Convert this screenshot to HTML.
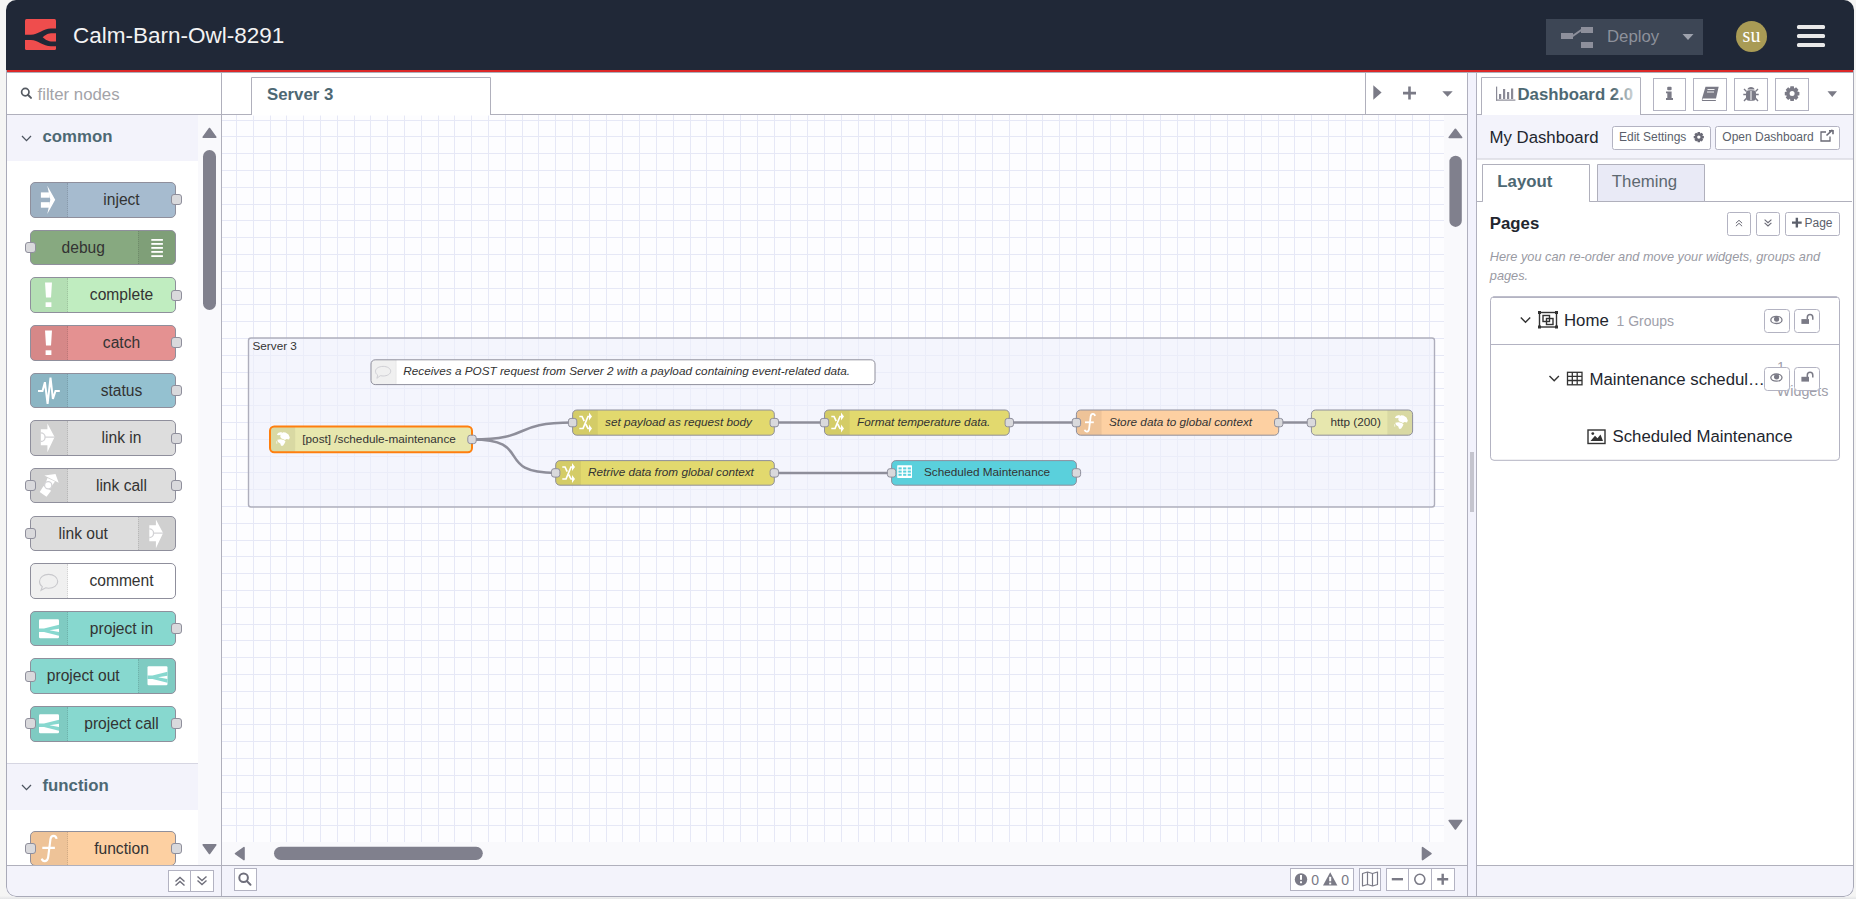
<!DOCTYPE html><html><head><meta charset="utf-8"><style>
*{box-sizing:border-box;margin:0;padding:0}
html,body{width:1856px;height:899px;overflow:hidden;background:linear-gradient(#f5f5f4 0,#f5f5f4 896px,#eeeeef 897px,#e4e5e6 899px);font-family:"Liberation Sans",sans-serif}
.a{position:absolute}
#win{position:absolute;left:6px;top:0;width:1848px;height:897px;border-radius:10px;overflow:hidden;background:#fff}
#wborder{position:absolute;left:0;top:60px;width:1848px;height:837px;border-radius:0 0 10px 10px;border:1px solid #a9aab8;border-top:none;pointer-events:none}
#hdr{position:absolute;left:0;top:0;width:1848px;height:70px;background:#202837;z-index:5}
.title{left:67px;top:21.3px;font-size:22.5px;color:#f3f3f3;white-space:nowrap;line-height:30px}
.deploy{left:1540px;top:19px;width:157px;height:36px;background:#3d4655}
.deploy span{position:absolute;left:61px;top:8px;font-size:16.8px;color:#8d919b;line-height:20px}
.avatar{left:1730px;top:21px;width:31px;height:31px;border-radius:50%;background:#a99b55;color:#fff;font-family:"Liberation Serif",serif;font-size:20px;text-align:center;line-height:29px}
.burger{left:1791px;width:28px;height:4.6px;background:#e9e9e9;border-radius:1.5px}
.pn{position:absolute;left:24px;width:146px;height:35.6px;border:1px solid #8f8f9c;border-radius:5px}
.pn .ic{position:absolute;top:0;bottom:0;width:37px;background:rgba(0,0,0,0.06)}
.pn .ic.l{left:0;border-right:1px dotted rgba(0,0,0,0.12);border-radius:4px 0 0 4px}
.pn .ic.r{right:0;border-left:1px dotted rgba(0,0,0,0.12);border-radius:0 4px 4px 0}
.pn .lb{position:absolute;top:0;line-height:33.6px;font-size:15.6px;color:#333;text-align:center;white-space:nowrap}
.pn .ic svg{position:absolute;left:0;top:0}
.port{position:absolute;width:11px;height:11px;background:#d9d9dc;border:1px solid #8f8f9c;border-radius:3px}
.cat{position:absolute;left:0;width:192px;height:46px;background:#f3f3fb}
.cat .t{position:absolute;left:36.5px;top:12px;font-size:16.8px;font-weight:bold;color:#4d6873;line-height:20px}
.cat svg{position:absolute;left:14px;top:19px}
.btn{position:absolute;background:#fff;border:1px solid #b3b3c2}
</style></head><body><div id="win">
<div id="hdr">
<svg class="a" style="left:19px;top:19px" width="31" height="31" viewBox="25 19 31 31">
<rect x="25" y="19" width="31" height="31" rx="1.5" fill="#ef4d4d"/>
<path d="M25,34.8 L31,34.8 C38,34.8 43,28.5 51,28.5 L56,28.5 L56,33.3 L51,33.3 C47,33.3 44,36.3 42.7,37.3 C44,38.3 47,41.4 51,41.4 L56,41.4 L56,46.2 L51,46.2 C43,46.2 38,39.9 31,39.9 L25,39.9 Z" fill="#202837"/>
</svg>
<div class="a title">Calm-Barn-Owl-8291</div>
<div class="a deploy">
<svg class="a" style="left:15px;top:8px" width="34" height="22" viewBox="1561 27 34 22">
<rect x="1561" y="33" width="12" height="6" fill="#8d8f9b"/><rect x="1581" y="27" width="12" height="6" fill="#8d8f9b"/><rect x="1581" y="42" width="12" height="6" fill="#8d8f9b"/>
<path d="M1572,36.5 L1582,29.5" stroke="#8d8f9b" stroke-width="2"/></svg>
<span>Deploy</span>
<svg class="a" style="left:136px;top:14px" width="12" height="8" viewBox="0 0 12 8"><path d="M0.5,1 L11.5,1 L6,7 Z" fill="#9ea2ad"/></svg>
</div>
<div class="a avatar">su</div>
<div class="a burger" style="top:24.5px"></div><div class="a burger" style="top:33.8px"></div><div class="a burger" style="top:42.7px"></div>
</div>
<div class="a" style="left:0;top:70px;width:1848px;height:2px;background:#dc2828"></div>
<div class="a" style="left:0;top:72px;width:1848px;height:1px;background:#aeafbb"></div>

<div class="a" style="left:0;top:73px;width:215px;height:823px;background:#fff;overflow:hidden">
<svg class="a" style="left:14px;top:14px" width="13" height="13" viewBox="0 0 13 13"><circle cx="5.3" cy="5.1" r="3.7" fill="none" stroke="#555a62" stroke-width="1.7"/><path d="M7.9,7.8 L11,10.9" stroke="#555a62" stroke-width="2" stroke-linecap="round"/></svg>
<div class="a" style="left:31.5px;top:11.799999999999997px;font-size:16.8px;color:#a3a3a8;line-height:20px">filter nodes</div>
<div class="a" style="left:0;top:41px;width:215px;height:1px;background:#b0b0bc"></div>
<div class="a" style="left:192px;top:42px;width:23px;height:750px;background:#f9f9fc"></div>
<svg class="a" style="left:196px;top:54px" width="15" height="12" viewBox="0 0 15 12"><path d="M7.5,1.5 L13.8,10.2 L1.2,10.2 Z" fill="#7e7e8b" stroke="#7e7e8b" stroke-width="1.6" stroke-linejoin="round"/></svg>
<div class="a" style="left:197px;top:77px;width:13px;height:160px;border-radius:6.5px;background:#80808d"></div>
<svg class="a" style="left:196px;top:770px" width="15" height="12" viewBox="0 0 15 12"><path d="M7.5,10.5 L13.8,1.8 L1.2,1.8 Z" fill="#7e7e8b" stroke="#7e7e8b" stroke-width="1.6" stroke-linejoin="round"/></svg>
<div class="cat" style="top:42px"><svg class="a" style="left:15px;top:20px" width="11" height="7" viewBox="0 0 11 7"><path d="M1,1 L5.5,5.6 L10,1" fill="none" stroke="#4d5560" stroke-width="1.3"/></svg><div class="t">common</div></div>
<div class="a" style="left:0;top:690px;width:192px;height:1px;background:#d6d6e2"></div>
<div class="cat" style="top:691px"><svg class="a" style="left:15px;top:20px" width="11" height="7" viewBox="0 0 11 7"><path d="M1,1 L5.5,5.6 L10,1" fill="none" stroke="#4d5560" stroke-width="1.3"/></svg><div class="t">function</div></div>
<div class="pn" style="top:109.1px;background:#a6bbcf"><div class="ic l"></div><div class="lb" style="left:37px;width:107px">inject</div><svg class="a" style="left:-1px;top:-1px" width="146" height="36" viewBox="0 0 146 36"><rect x="10.9" y="10.4" width="8.8" height="5.3" fill="#fff"/><rect x="10.9" y="20.2" width="8.8" height="5.5" fill="#fff"/><path d="M17.3,3.7 L25.2,17.8 L17.3,32.1 L20.3,17.8 Z" fill="#fff"/></svg></div>
<div class="port" style="left:164.5px;top:121.4px"></div>
<div class="pn" style="top:156.7px;background:#87a980"><div class="lb" style="left:0;width:104.5px">debug</div><div class="ic r"></div><svg class="a" style="left:-1px;top:-1px" width="146" height="36" viewBox="0 0 146 36"><g fill="#fff"><rect x="121.3" y="9" width="11.6" height="1.8"/><rect x="121.3" y="13" width="11.6" height="1.8"/><rect x="121.3" y="17" width="11.6" height="1.8"/><rect x="121.3" y="21" width="11.6" height="1.8"/><rect x="121.3" y="25.2" width="11.6" height="1.8"/></g></svg></div>
<div class="port" style="left:19.3px;top:169.0px"></div>
<div class="pn" style="top:204.4px;background:#c0edc0"><div class="ic l"></div><div class="lb" style="left:37px;width:107px">complete</div><svg class="a" style="left:-1px;top:-1px" width="146" height="36" viewBox="0 0 146 36"><path d="M15,5.6 L22,5.6 L21,20.5 L16,20.5 Z" fill="#fff"/><rect x="15.6" y="25.3" width="5.8" height="4.7" fill="#fff"/></svg></div>
<div class="port" style="left:164.5px;top:216.7px"></div>
<div class="pn" style="top:252.0px;background:#e49191"><div class="ic l"></div><div class="lb" style="left:37px;width:107px">catch</div><svg class="a" style="left:-1px;top:-1px" width="146" height="36" viewBox="0 0 146 36"><path d="M15,5.6 L22,5.6 L21,20.5 L16,20.5 Z" fill="#fff"/><rect x="15.6" y="25.3" width="5.8" height="4.7" fill="#fff"/></svg></div>
<div class="port" style="left:164.5px;top:264.3px"></div>
<div class="pn" style="top:299.6px;background:#94c1d0"><div class="ic l"></div><div class="lb" style="left:37px;width:107px">status</div><svg class="a" style="left:-1px;top:-1px" width="146" height="36" viewBox="0 0 146 36"><path d="M8,17.9 L12.5,17.9 L14.9,9.2 L17.6,30.8 L20.5,4.5 L22.9,25.9 L25.5,17.9 L29.8,17.9" fill="none" stroke="#fff" stroke-width="2" stroke-linejoin="miter" stroke-miterlimit="3"/></svg></div>
<div class="port" style="left:164.5px;top:311.9px"></div>
<div class="pn" style="top:347.2px;background:#dddddd"><div class="ic l"></div><div class="lb" style="left:37px;width:107px">link in</div><svg class="a" style="left:-1px;top:-1px" width="146" height="36" viewBox="0 0 146 36"><path d="M10.8,9.3 L17.4,9.3 L17.4,3.5 L24.6,16.9 L17.4,32.2 L17.4,25.3 L10.8,25.3 Z" fill="#fff"/><path d="M10.8,12.9 A4.3,4.3 0 0 1 10.8,21.5 M15.1,17.2 L25,17.2" fill="none" stroke="#d3d3d6" stroke-width="1.3"/></svg></div>
<div class="port" style="left:164.5px;top:359.6px"></div>
<div class="pn" style="top:394.9px;background:#dddddd"><div class="ic l"></div><div class="lb" style="left:37px;width:107px">link call</div><svg class="a" style="left:-1px;top:-1px" width="146" height="36" viewBox="0 0 146 36"><path d="M14.4,7.6 L25.5,6.1 L28.7,14.8 Z M17.5,10.1 L25,13.6 L21,19.1 L15.5,15.1 Z M9.7,23.9 L13.5,18 L21.1,22.8 L16.5,28.7 Z" fill="#fff"/><circle cx="18.2" cy="17.3" r="3.6" fill="#fff" stroke="#d3d3d6" stroke-width="1.2"/></svg></div>
<div class="port" style="left:19.3px;top:407.2px"></div>
<div class="port" style="left:164.5px;top:407.2px"></div>
<div class="pn" style="top:442.5px;background:#dddddd"><div class="lb" style="left:0;width:104.5px">link out</div><div class="ic r"></div><svg class="a" style="left:-1px;top:-1px" width="146" height="36" viewBox="0 0 146 36"><g transform="translate(108.5,0)"><path d="M10.8,9.3 L17.4,9.3 L17.4,3.5 L24.6,16.9 L17.4,32.2 L17.4,25.3 L10.8,25.3 Z" fill="#fff"/><path d="M10.8,12.9 A4.3,4.3 0 0 1 10.8,21.5 M15.1,17.2 L25,17.2" fill="none" stroke="#d3d3d6" stroke-width="1.3"/></g></svg></div>
<div class="port" style="left:19.3px;top:454.8px"></div>
<div class="pn" style="top:490.1px;background:#ffffff"><div class="ic l"></div><div class="lb" style="left:37px;width:107px">comment</div><svg class="a" style="left:-1px;top:-1px" width="146" height="36" viewBox="0 0 146 36"><path d="M9.5,18.5 C9.5,14.3 13.6,11.4 18.6,11.4 C23.6,11.4 27.7,14.3 27.7,18.5 C27.7,22.6 23.6,25.2 18.6,25.2 C17.6,25.2 16.6,25.1 15.7,24.8 L11,27.3 L12.3,23.6 C10.5,22.4 9.5,20.6 9.5,18.5 Z" fill="none" stroke="#c8c8cc" stroke-width="1.1"/></svg></div>
<div class="pn" style="top:537.8px;background:#87d8cf"><div class="ic l"></div><div class="lb" style="left:37px;width:107px">project in</div><svg class="a" style="left:-1px;top:-1px" width="146" height="36" viewBox="0 0 146 36"><g transform="translate(9,8.2)"><rect x="0" y="0" width="20" height="19" rx="1.2" fill="#fff"/><path d="M0,9.2 L5,9.2 L20,5.5 L20,9.5 L10.5,11.05 L20,12.9 L20,16.6 L5,12.9 L0,12.9 Z" fill="#87d8cf"/></g></svg></div>
<div class="port" style="left:164.5px;top:550.1px"></div>
<div class="pn" style="top:585.4px;background:#87d8cf"><div class="lb" style="left:0;width:104.5px">project out</div><div class="ic r"></div><svg class="a" style="left:-1px;top:-1px" width="146" height="36" viewBox="0 0 146 36"><g transform="translate(108.5,0)"><g transform="translate(9,8.2)"><rect x="0" y="0" width="20" height="19" rx="1.2" fill="#fff"/><path d="M0,9.2 L5,9.2 L20,5.5 L20,9.5 L10.5,11.05 L20,12.9 L20,16.6 L5,12.9 L0,12.9 Z" fill="#87d8cf"/></g></g></svg></div>
<div class="port" style="left:19.3px;top:597.7px"></div>
<div class="pn" style="top:633.0px;background:#87d8cf"><div class="ic l"></div><div class="lb" style="left:37px;width:107px">project call</div><svg class="a" style="left:-1px;top:-1px" width="146" height="36" viewBox="0 0 146 36"><g transform="translate(9,8.2)"><rect x="0" y="0" width="20" height="19" rx="1.2" fill="#fff"/><path d="M0,9.2 L5,9.2 L20,5.5 L20,9.5 L10.5,11.05 L20,12.9 L20,16.6 L5,12.9 L0,12.9 Z" fill="#87d8cf"/></g></svg></div>
<div class="port" style="left:19.3px;top:645.3px"></div>
<div class="port" style="left:164.5px;top:645.3px"></div>
<div class="pn" style="top:757.5px;background:#fdd0a2"><div class="ic l"></div><div class="lb" style="left:37px;width:107px">function</div><svg class="a" style="left:-1px;top:-1px" width="146" height="36" viewBox="0 0 146 36"><g transform="scale(1.43) translate(-1076.4,-410.5)"><g fill="none" stroke="#fff" stroke-width="1.5"><path d="M1095,416 C1094.5,413.3 1091.3,413 1090.7,416.2 L1089.1,428.8 C1088.6,432.3 1085.4,432.3 1084.6,429.8"/><path d="M1085,422.3 L1093.8,422.3"/></g></g></svg></div>
<div class="port" style="left:19.3px;top:769.8px"></div>
<div class="port" style="left:164.5px;top:769.8px"></div>
<div class="a" style="left:0;top:792px;width:215px;height:31px;background:#f3f3fb;border-top:1px solid #b0b0bc"></div>
<div class="btn" style="left:162px;top:797px;width:23px;height:22px"><svg class="a" style="left:5px;top:5px" width="12" height="11" viewBox="0 0 12 11"><path d="M1.5,5.5 L6,1.5 L10.5,5.5 M1.5,9.5 L6,5.5 L10.5,9.5" fill="none" stroke="#6f6f7b" stroke-width="1.4"/></svg></div>
<div class="btn" style="left:184px;top:797px;width:24px;height:22px"><svg class="a" style="left:5px;top:4px" width="12" height="11" viewBox="0 0 12 11"><path d="M1.5,1.5 L6,5.5 L10.5,1.5 M1.5,5.5 L6,9.5 L10.5,5.5" fill="none" stroke="#6f6f7b" stroke-width="1.4"/></svg></div>
</div>
<div class="a" style="left:215px;top:73px;width:1px;height:823px;background:#b0b0bc"></div>
<svg class="a" style="left:-6px;top:0" width="1856" height="899" viewBox="0 0 1856 899" font-family="Liberation Sans, sans-serif"><rect x="222" y="73" width="1245" height="41" fill="#fff"/><rect x="222" y="114" width="1245" height="1" fill="#b0b0bc"/><rect x="222" y="115" width="1222" height="727" fill="#fdfdff"/><rect x="236" y="115" width="1" height="727" fill="#e6e8f6"/><rect x="253" y="115" width="1" height="727" fill="#e6e8f6"/><rect x="270" y="115" width="1" height="727" fill="#e6e8f6"/><rect x="286" y="115" width="1" height="727" fill="#e6e8f6"/><rect x="303" y="115" width="1" height="727" fill="#e6e8f6"/><rect x="320" y="115" width="1" height="727" fill="#e6e8f6"/><rect x="337" y="115" width="1" height="727" fill="#e6e8f6"/><rect x="354" y="115" width="1" height="727" fill="#e6e8f6"/><rect x="370" y="115" width="1" height="727" fill="#e6e8f6"/><rect x="387" y="115" width="1" height="727" fill="#e6e8f6"/><rect x="404" y="115" width="1" height="727" fill="#e6e8f6"/><rect x="421" y="115" width="1" height="727" fill="#e6e8f6"/><rect x="438" y="115" width="1" height="727" fill="#e6e8f6"/><rect x="454" y="115" width="1" height="727" fill="#e6e8f6"/><rect x="471" y="115" width="1" height="727" fill="#e6e8f6"/><rect x="488" y="115" width="1" height="727" fill="#e6e8f6"/><rect x="505" y="115" width="1" height="727" fill="#e6e8f6"/><rect x="522" y="115" width="1" height="727" fill="#e6e8f6"/><rect x="538" y="115" width="1" height="727" fill="#e6e8f6"/><rect x="555" y="115" width="1" height="727" fill="#e6e8f6"/><rect x="572" y="115" width="1" height="727" fill="#e6e8f6"/><rect x="589" y="115" width="1" height="727" fill="#e6e8f6"/><rect x="606" y="115" width="1" height="727" fill="#e6e8f6"/><rect x="622" y="115" width="1" height="727" fill="#e6e8f6"/><rect x="639" y="115" width="1" height="727" fill="#e6e8f6"/><rect x="656" y="115" width="1" height="727" fill="#e6e8f6"/><rect x="673" y="115" width="1" height="727" fill="#e6e8f6"/><rect x="690" y="115" width="1" height="727" fill="#e6e8f6"/><rect x="706" y="115" width="1" height="727" fill="#e6e8f6"/><rect x="723" y="115" width="1" height="727" fill="#e6e8f6"/><rect x="740" y="115" width="1" height="727" fill="#e6e8f6"/><rect x="757" y="115" width="1" height="727" fill="#e6e8f6"/><rect x="774" y="115" width="1" height="727" fill="#e6e8f6"/><rect x="790" y="115" width="1" height="727" fill="#e6e8f6"/><rect x="807" y="115" width="1" height="727" fill="#e6e8f6"/><rect x="824" y="115" width="1" height="727" fill="#e6e8f6"/><rect x="841" y="115" width="1" height="727" fill="#e6e8f6"/><rect x="858" y="115" width="1" height="727" fill="#e6e8f6"/><rect x="874" y="115" width="1" height="727" fill="#e6e8f6"/><rect x="891" y="115" width="1" height="727" fill="#e6e8f6"/><rect x="908" y="115" width="1" height="727" fill="#e6e8f6"/><rect x="925" y="115" width="1" height="727" fill="#e6e8f6"/><rect x="942" y="115" width="1" height="727" fill="#e6e8f6"/><rect x="958" y="115" width="1" height="727" fill="#e6e8f6"/><rect x="975" y="115" width="1" height="727" fill="#e6e8f6"/><rect x="992" y="115" width="1" height="727" fill="#e6e8f6"/><rect x="1009" y="115" width="1" height="727" fill="#e6e8f6"/><rect x="1026" y="115" width="1" height="727" fill="#e6e8f6"/><rect x="1042" y="115" width="1" height="727" fill="#e6e8f6"/><rect x="1059" y="115" width="1" height="727" fill="#e6e8f6"/><rect x="1076" y="115" width="1" height="727" fill="#e6e8f6"/><rect x="1093" y="115" width="1" height="727" fill="#e6e8f6"/><rect x="1110" y="115" width="1" height="727" fill="#e6e8f6"/><rect x="1126" y="115" width="1" height="727" fill="#e6e8f6"/><rect x="1143" y="115" width="1" height="727" fill="#e6e8f6"/><rect x="1160" y="115" width="1" height="727" fill="#e6e8f6"/><rect x="1177" y="115" width="1" height="727" fill="#e6e8f6"/><rect x="1194" y="115" width="1" height="727" fill="#e6e8f6"/><rect x="1210" y="115" width="1" height="727" fill="#e6e8f6"/><rect x="1227" y="115" width="1" height="727" fill="#e6e8f6"/><rect x="1244" y="115" width="1" height="727" fill="#e6e8f6"/><rect x="1261" y="115" width="1" height="727" fill="#e6e8f6"/><rect x="1278" y="115" width="1" height="727" fill="#e6e8f6"/><rect x="1294" y="115" width="1" height="727" fill="#e6e8f6"/><rect x="1311" y="115" width="1" height="727" fill="#e6e8f6"/><rect x="1328" y="115" width="1" height="727" fill="#e6e8f6"/><rect x="1345" y="115" width="1" height="727" fill="#e6e8f6"/><rect x="1362" y="115" width="1" height="727" fill="#e6e8f6"/><rect x="1378" y="115" width="1" height="727" fill="#e6e8f6"/><rect x="1395" y="115" width="1" height="727" fill="#e6e8f6"/><rect x="1412" y="115" width="1" height="727" fill="#e6e8f6"/><rect x="1429" y="115" width="1" height="727" fill="#e6e8f6"/><rect x="222" y="120" width="1222" height="1" fill="#e6e8f6"/><rect x="222" y="136" width="1222" height="1" fill="#e6e8f6"/><rect x="222" y="153" width="1222" height="1" fill="#e6e8f6"/><rect x="222" y="170" width="1222" height="1" fill="#e6e8f6"/><rect x="222" y="187" width="1222" height="1" fill="#e6e8f6"/><rect x="222" y="204" width="1222" height="1" fill="#e6e8f6"/><rect x="222" y="220" width="1222" height="1" fill="#e6e8f6"/><rect x="222" y="237" width="1222" height="1" fill="#e6e8f6"/><rect x="222" y="254" width="1222" height="1" fill="#e6e8f6"/><rect x="222" y="271" width="1222" height="1" fill="#e6e8f6"/><rect x="222" y="288" width="1222" height="1" fill="#e6e8f6"/><rect x="222" y="304" width="1222" height="1" fill="#e6e8f6"/><rect x="222" y="321" width="1222" height="1" fill="#e6e8f6"/><rect x="222" y="338" width="1222" height="1" fill="#e6e8f6"/><rect x="222" y="355" width="1222" height="1" fill="#e6e8f6"/><rect x="222" y="372" width="1222" height="1" fill="#e6e8f6"/><rect x="222" y="388" width="1222" height="1" fill="#e6e8f6"/><rect x="222" y="405" width="1222" height="1" fill="#e6e8f6"/><rect x="222" y="422" width="1222" height="1" fill="#e6e8f6"/><rect x="222" y="439" width="1222" height="1" fill="#e6e8f6"/><rect x="222" y="456" width="1222" height="1" fill="#e6e8f6"/><rect x="222" y="472" width="1222" height="1" fill="#e6e8f6"/><rect x="222" y="489" width="1222" height="1" fill="#e6e8f6"/><rect x="222" y="506" width="1222" height="1" fill="#e6e8f6"/><rect x="222" y="523" width="1222" height="1" fill="#e6e8f6"/><rect x="222" y="540" width="1222" height="1" fill="#e6e8f6"/><rect x="222" y="556" width="1222" height="1" fill="#e6e8f6"/><rect x="222" y="573" width="1222" height="1" fill="#e6e8f6"/><rect x="222" y="590" width="1222" height="1" fill="#e6e8f6"/><rect x="222" y="607" width="1222" height="1" fill="#e6e8f6"/><rect x="222" y="624" width="1222" height="1" fill="#e6e8f6"/><rect x="222" y="640" width="1222" height="1" fill="#e6e8f6"/><rect x="222" y="657" width="1222" height="1" fill="#e6e8f6"/><rect x="222" y="674" width="1222" height="1" fill="#e6e8f6"/><rect x="222" y="691" width="1222" height="1" fill="#e6e8f6"/><rect x="222" y="708" width="1222" height="1" fill="#e6e8f6"/><rect x="222" y="724" width="1222" height="1" fill="#e6e8f6"/><rect x="222" y="741" width="1222" height="1" fill="#e6e8f6"/><rect x="222" y="758" width="1222" height="1" fill="#e6e8f6"/><rect x="222" y="775" width="1222" height="1" fill="#e6e8f6"/><rect x="222" y="792" width="1222" height="1" fill="#e6e8f6"/><rect x="222" y="808" width="1222" height="1" fill="#e6e8f6"/><rect x="222" y="825" width="1222" height="1" fill="#e6e8f6"/><rect x="248.5" y="338" width="1186" height="169" rx="2.5" fill="#eef0fb" fill-opacity="0.6" stroke="#aeaebc" stroke-width="1.4"/><text x="252.5" y="349.8" font-size="11.76" fill="#333">Server 3</text><path d="M472,439.4 C535,439.4 509.6,422.6 572.6,422.6" fill="none" stroke="#8e8e9a" stroke-width="2.5"/><path d="M472,439.4 C535,439.4 492.70000000000005,472.9 555.7,472.9" fill="none" stroke="#8e8e9a" stroke-width="2.5"/><path d="M774.3,422.6 L824.5,422.6 M1009.3,422.6 L1076.4,422.6 M1278.7,422.6 L1311.4,422.6 M774.3,472.9 L891.6,472.9" stroke="#8e8e9a" stroke-width="2.5"/><rect x="371" y="359.8" width="504.0" height="24.8" rx="4.2" fill="#fff" stroke="none"/><path d="M375.2,359.8 L396.2,359.8 L396.2,384.6 L375.2,384.6 A4.2,4.2 0 0 1 371,380.40000000000003 L371,364.0 A4.2,4.2 0 0 1 375.2,359.8 Z" fill="#000" fill-opacity="0.06"/><rect x="371" y="359.8" width="504.0" height="24.8" rx="4.2" fill="none" stroke="#8f8f9c" stroke-width="1"/><g transform="translate(374.5,365)"><path d="M1,6.2 C1,3.4 4.4,1.4 8.6,1.4 C12.8,1.4 16.2,3.4 16.2,6.2 C16.2,9 12.8,11 8.6,11 C7.6,11 6.7,10.9 5.8,10.7 L2.4,13.3 L3.2,10.1 C1.8,9.2 1,7.8 1,6.2 Z" fill="none" stroke="#cfcfd4" stroke-width="1"/></g><text x="403.3" y="375.4" font-size="11.76" fill="#333" style="font-style:italic;">Receives a POST request from Server 2 with a payload containing event-related data.</text><path d="M396.2,360.3 L396.2,384.1" stroke="#000" stroke-opacity="0.06"/><rect x="270" y="426.6" width="202.0" height="25.6" rx="4.2" fill="#e7e7ae" stroke="none"/><path d="M274.2,426.6 L295.2,426.6 L295.2,452.2 L274.2,452.2 A4.2,4.2 0 0 1 270,448.0 L270,430.8 A4.2,4.2 0 0 1 274.2,426.6 Z" fill="#000" fill-opacity="0.06"/><rect x="270" y="426.6" width="202.0" height="25.6" rx="4.2" fill="none" stroke="#ff7f0e" stroke-width="2"/><g transform="translate(276.5,432)"><g fill="#fff"><path d="M0.3,2.5 L2,0.8 L5,0 L5.6,1.5 L4,3 L1.5,3.3 Z"/><path d="M4,2.5 L6.5,0.2 L9,0.5 L12,2.5 L13.3,5.5 L12.5,7.5 L10,7 L8.5,8 L7,7.2 L5,6.5 L3.8,5 Z"/><path d="M0.8,7.8 L4,7.2 L7.5,8 L9,9.5 L8,11.5 L6.5,13.8 L4.5,13.8 L3.8,11.5 L1.5,10 Z"/><path d="M-0.5,9.3 L0.6,9.3 L0.8,11.8 L-0.2,11.8 Z" opacity="0.6"/></g></g><text x="302.3" y="442.6" font-size="11.76" fill="#333" style="">[post] /schedule-maintenance</text><rect x="467.8" y="435.2" width="8.4" height="8.4" rx="2.5" fill="#d9d9dc" stroke="#8f8f9c" stroke-width="1"/><rect x="572.6" y="410" width="201.7" height="25.2" rx="4.2" fill="#e2d96e" stroke="none"/><path d="M576.8000000000001,410 L597.8000000000001,410 L597.8000000000001,435.2 L576.8000000000001,435.2 A4.2,4.2 0 0 1 572.6,431.0 L572.6,414.2 A4.2,4.2 0 0 1 576.8000000000001,410 Z" fill="#000" fill-opacity="0.06"/><rect x="572.6" y="410" width="201.7" height="25.2" rx="4.2" fill="none" stroke="#8f8f9c" stroke-width="1"/><g transform="translate(579,412)"><g fill="none" stroke="#fff" stroke-width="1.7"><path d="M0.3,16.5 L4,16.5 L9,4.5 L10.8,4.5"/><path d="M0.3,4.5 L3,4.5 L5.2,9.2 M6.6,12 L9,16.5 L10.8,16.5"/></g><g fill="#fff"><path d="M10,0.6 L13,4.5 L10,8.4 Z"/><path d="M10,12.6 L13,16.5 L10,20.4 Z"/></g></g><text x="605" y="425.8" font-size="11.76" fill="#333" style="font-style:italic;">set payload as request body</text><rect x="568.4" y="418.4" width="8.4" height="8.4" rx="2.5" fill="#d9d9dc" stroke="#8f8f9c" stroke-width="1"/><rect x="770.1" y="418.4" width="8.4" height="8.4" rx="2.5" fill="#d9d9dc" stroke="#8f8f9c" stroke-width="1"/><rect x="824.5" y="410" width="184.8" height="25.2" rx="4.2" fill="#e2d96e" stroke="none"/><path d="M828.7,410 L849.7,410 L849.7,435.2 L828.7,435.2 A4.2,4.2 0 0 1 824.5,431.0 L824.5,414.2 A4.2,4.2 0 0 1 828.7,410 Z" fill="#000" fill-opacity="0.06"/><rect x="824.5" y="410" width="184.8" height="25.2" rx="4.2" fill="none" stroke="#8f8f9c" stroke-width="1"/><g transform="translate(831,412)"><g fill="none" stroke="#fff" stroke-width="1.7"><path d="M0.3,16.5 L4,16.5 L9,4.5 L10.8,4.5"/><path d="M0.3,4.5 L3,4.5 L5.2,9.2 M6.6,12 L9,16.5 L10.8,16.5"/></g><g fill="#fff"><path d="M10,0.6 L13,4.5 L10,8.4 Z"/><path d="M10,12.6 L13,16.5 L10,20.4 Z"/></g></g><text x="857" y="425.8" font-size="11.76" fill="#333" style="font-style:italic;">Format temperature data.</text><rect x="820.3" y="418.4" width="8.4" height="8.4" rx="2.5" fill="#d9d9dc" stroke="#8f8f9c" stroke-width="1"/><rect x="1005.1" y="418.4" width="8.4" height="8.4" rx="2.5" fill="#d9d9dc" stroke="#8f8f9c" stroke-width="1"/><rect x="1076.4" y="410" width="202.3" height="25.2" rx="4.2" fill="#fdd0a2" stroke="none"/><path d="M1080.6000000000001,410 L1101.6000000000001,410 L1101.6000000000001,435.2 L1080.6000000000001,435.2 A4.2,4.2 0 0 1 1076.4,431.0 L1076.4,414.2 A4.2,4.2 0 0 1 1080.6000000000001,410 Z" fill="#000" fill-opacity="0.06"/><rect x="1076.4" y="410" width="202.3" height="25.2" rx="4.2" fill="none" stroke="#8f8f9c" stroke-width="1"/><g fill="none" stroke="#fff" stroke-width="1.8"><path d="M1095,416 C1094.5,413.3 1091.3,413 1090.7,416.2 L1089.1,428.8 C1088.6,432.3 1085.4,432.3 1084.6,429.8"/><path d="M1085,422.3 L1093.8,422.3"/></g><text x="1109" y="425.8" font-size="11.76" fill="#333" style="font-style:italic;">Store data to global context</text><rect x="1072.2" y="418.4" width="8.4" height="8.4" rx="2.5" fill="#d9d9dc" stroke="#8f8f9c" stroke-width="1"/><rect x="1274.5" y="418.4" width="8.4" height="8.4" rx="2.5" fill="#d9d9dc" stroke="#8f8f9c" stroke-width="1"/><rect x="1311.4" y="410" width="101.2" height="25.2" rx="4.2" fill="#e7e7ae" stroke="none"/><path d="M1387.3999999999999,410 L1408.3999999999999,410 A4.2,4.2 0 0 1 1412.6,414.2 L1412.6,431.0 A4.2,4.2 0 0 1 1408.3999999999999,435.2 L1387.3999999999999,435.2 Z" fill="#000" fill-opacity="0.06"/><rect x="1311.4" y="410" width="101.2" height="25.2" rx="4.2" fill="none" stroke="#8f8f9c" stroke-width="1"/><g transform="translate(1394.5,415)"><g fill="#fff"><path d="M0.3,2.5 L2,0.8 L5,0 L5.6,1.5 L4,3 L1.5,3.3 Z"/><path d="M4,2.5 L6.5,0.2 L9,0.5 L12,2.5 L13.3,5.5 L12.5,7.5 L10,7 L8.5,8 L7,7.2 L5,6.5 L3.8,5 Z"/><path d="M0.8,7.8 L4,7.2 L7.5,8 L9,9.5 L8,11.5 L6.5,13.8 L4.5,13.8 L3.8,11.5 L1.5,10 Z"/><path d="M-0.5,9.3 L0.6,9.3 L0.8,11.8 L-0.2,11.8 Z" opacity="0.6"/></g></g><text x="1330.5" y="425.8" font-size="11.76" fill="#333" style="">http (200)</text><rect x="1307.2" y="418.4" width="8.4" height="8.4" rx="2.5" fill="#d9d9dc" stroke="#8f8f9c" stroke-width="1"/><rect x="555.7" y="460.6" width="218.6" height="24.6" rx="4.2" fill="#e2d96e" stroke="none"/><path d="M559.9000000000001,460.6 L580.9000000000001,460.6 L580.9000000000001,485.2 L559.9000000000001,485.2 A4.2,4.2 0 0 1 555.7,481.0 L555.7,464.8 A4.2,4.2 0 0 1 559.9000000000001,460.6 Z" fill="#000" fill-opacity="0.06"/><rect x="555.7" y="460.6" width="218.6" height="24.6" rx="4.2" fill="none" stroke="#8f8f9c" stroke-width="1"/><g transform="translate(562,462.5)"><g fill="none" stroke="#fff" stroke-width="1.7"><path d="M0.3,16.5 L4,16.5 L9,4.5 L10.8,4.5"/><path d="M0.3,4.5 L3,4.5 L5.2,9.2 M6.6,12 L9,16.5 L10.8,16.5"/></g><g fill="#fff"><path d="M10,0.6 L13,4.5 L10,8.4 Z"/><path d="M10,12.6 L13,16.5 L10,20.4 Z"/></g></g><text x="588" y="476.1" font-size="11.76" fill="#333" style="font-style:italic;">Retrive data from global context</text><rect x="551.5" y="468.7" width="8.4" height="8.4" rx="2.5" fill="#d9d9dc" stroke="#8f8f9c" stroke-width="1"/><rect x="770.1" y="468.7" width="8.4" height="8.4" rx="2.5" fill="#d9d9dc" stroke="#8f8f9c" stroke-width="1"/><rect x="891.6" y="460.6" width="184.8" height="24.6" rx="4.2" fill="#5ad0dc" stroke="none"/><rect x="891.6" y="460.6" width="184.8" height="24.6" rx="4.2" fill="none" stroke="#8f8f9c" stroke-width="1"/><g transform="translate(897.2,465.2)"><rect x="0" y="0" width="14.8" height="12.7" rx="0.6" fill="#fff"/><g fill="#5ad0dc"><rect x="1.3" y="2.2" width="3.2" height="2" /><rect x="1.3" y="5.4" width="3.2" height="2" /><rect x="1.3" y="8.6" width="3.2" height="2" /><rect x="5.9" y="2.2" width="3.2" height="2" /><rect x="5.9" y="5.4" width="3.2" height="2" /><rect x="5.9" y="8.6" width="3.2" height="2" /><rect x="10.5" y="2.2" width="3.2" height="2" /><rect x="10.5" y="5.4" width="3.2" height="2" /><rect x="10.5" y="8.6" width="3.2" height="2" /></g></g><text x="924" y="476.1" font-size="11.76" fill="#333" style="">Scheduled Maintenance</text><rect x="887.4" y="468.7" width="8.4" height="8.4" rx="2.5" fill="#d9d9dc" stroke="#8f8f9c" stroke-width="1"/><rect x="1072.2" y="468.7" width="8.4" height="8.4" rx="2.5" fill="#d9d9dc" stroke="#8f8f9c" stroke-width="1"/><rect x="1444" y="115" width="23" height="727" fill="#f9f9fc"/><path d="M1455.4,129.3 L1461.6,137.5 L1449.2,137.5 Z" fill="#7e7e8b" stroke="#7e7e8b" stroke-width="1.6" stroke-linejoin="round"/><rect x="1449.4" y="155.7" width="12.4" height="71.2" rx="6.2" fill="#80808d"/><path d="M1455.4,829 L1461.6,820.5 L1449.2,820.5 Z" fill="#7e7e8b" stroke="#7e7e8b" stroke-width="1.6" stroke-linejoin="round"/><rect x="222" y="842" width="1245" height="23" fill="#f9f9fc"/><path d="M235.5,853.6 L244,847.6 L244,859.6 Z" fill="#7e7e8b" stroke="#7e7e8b" stroke-width="1.6" stroke-linejoin="round"/><rect x="274" y="846.7" width="208.8" height="13.2" rx="6.6" fill="#80808d"/><path d="M1431,853.6 L1422.5,847.6 L1422.5,859.6 Z" fill="#7e7e8b" stroke="#7e7e8b" stroke-width="1.6" stroke-linejoin="round"/><rect x="222" y="865" width="1245" height="32" fill="#f3f3fb"/><rect x="222" y="865" width="1245" height="1" fill="#b0b0bc"/><rect x="234.5" y="868.5" width="22" height="22" fill="#fff" stroke="#b3b3c2" stroke-width="1"/><g fill="none" stroke="#6f6f7b" stroke-width="2"><circle cx="243.6" cy="877.8" r="4.3"/><path d="M246.8,881 L250.5,884.7" stroke-linecap="round"/></g><rect x="1290.5" y="868.5" width="63" height="22" fill="#fff" stroke="#b3b3c2" stroke-width="1"/><circle cx="1301" cy="879.5" r="6.2" fill="#7a7a86"/><rect x="1300" y="875" width="2" height="4.8" fill="#fff"/><rect x="1300" y="881.3" width="2" height="1.9" fill="#fff"/><text x="1311.2" y="884.7" font-size="14" fill="#7a7a86">0</text><path d="M1330.2,872.2 L1337.4,885.6 L1323,885.6 Z" fill="#7a7a86"/><rect x="1329.2" y="876.8" width="2" height="4.5" fill="#fff"/><rect x="1329.2" y="882.6" width="2" height="1.8" fill="#fff"/><text x="1341.2" y="884.7" font-size="14" fill="#7a7a86">0</text><rect x="1359.5" y="868.5" width="21" height="22" fill="#fff" stroke="#b3b3c2" stroke-width="1"/><path d="M1362.5,873.5 L1367.5,872 L1372.5,873.5 L1377.5,872 L1377.5,884.5 L1372.5,886 L1367.5,884.5 L1362.5,886 Z M1367.5,872 L1367.5,884.5 M1372.5,873.5 L1372.5,886" fill="none" stroke="#7a7a86" stroke-width="1.2" stroke-linejoin="round"/><rect x="1386.5" y="868.5" width="22" height="22" fill="#fff" stroke="#b3b3c2" stroke-width="1"/><rect x="1408.5" y="868.5" width="23" height="22" fill="#fff" stroke="#b3b3c2" stroke-width="1"/><rect x="1431.5" y="868.5" width="23" height="22" fill="#fff" stroke="#b3b3c2" stroke-width="1"/><rect x="1391.8" y="878" width="11.2" height="2.4" fill="#7a7a86"/><circle cx="1419.8" cy="879.3" r="5" fill="none" stroke="#7a7a86" stroke-width="1.6"/><path d="M1437.2,879.2 L1448.2,879.2 M1442.7,873.7 L1442.7,884.7" stroke="#7a7a86" stroke-width="2.4"/><path d="M251.5,114 L251.5,77.5 L490.5,77.5 L490.5,114" fill="#fff" stroke="#b0b0bc" stroke-width="1"/><rect x="252" y="114" width="238" height="1.5" fill="#fff"/><text x="267" y="99.7" font-size="16.8" font-weight="bold" fill="#4d6873">Server 3</text><rect x="1365" y="73" width="1" height="41" fill="#b0b0bc"/><path d="M1373.3,85.3 L1381.6,92.5 L1373.3,99.7 Z" fill="#7a7a86"/><path d="M1403,93.1 L1416,93.1 M1409.5,86.6 L1409.5,99.6" stroke="#7a7a86" stroke-width="2.6"/><path d="M1442.3,91.3 L1452.7,91.3 L1447.5,96.8 Z" fill="#7a7a86"/><rect x="1467" y="73" width="1" height="824" fill="#b0b0be"/><rect x="1468" y="73" width="8" height="824" fill="#f2f2fc"/><rect x="1470" y="452" width="4" height="60" fill="#c4c4ce"/><rect x="1476" y="73" width="1" height="824" fill="#b0b0be"/></svg>
<svg class="a" style="left:-6px;top:0" width="1856" height="899" viewBox="0 0 1856 899" font-family="Liberation Sans, sans-serif"><rect x="1477" y="73" width="377" height="824" fill="#fff"/><rect x="1477" y="114" width="377" height="1" fill="#b0b0bc"/><path d="M1481.5,114 L1481.5,77.5 L1640.5,77.5 L1640.5,114" fill="#fff" stroke="#b0b0bc"/><rect x="1482" y="113.5" width="158" height="2" fill="#fff"/><g fill="#8a8a96"><rect x="1496" y="86.6" width="1.2" height="14"/><rect x="1496" y="99.5" width="19.4" height="1.2"/><rect x="1499" y="94" width="2.2" height="5"/><rect x="1503" y="89" width="2.2" height="10"/><rect x="1507" y="92" width="2.2" height="7"/><rect x="1511" y="88.5" width="2.2" height="10.5"/></g><defs><linearGradient id="fade" gradientUnits="userSpaceOnUse" x1="1612" y1="0" x2="1634" y2="0"><stop offset="0" stop-color="#4d6873"/><stop offset="1" stop-color="#4d6873" stop-opacity="0.25"/></linearGradient></defs><text x="1517.5" y="100" font-size="16.8" font-weight="bold" fill="url(#fade)">Dashboard 2.0</text><rect x="1653.5" y="78.5" width="32.0" height="32.0" rx="0" fill="#fff" stroke="#b3b3c2"/><rect x="1693.5" y="78.5" width="33.0" height="32.0" rx="0" fill="#fff" stroke="#b3b3c2"/><rect x="1734.5" y="78.5" width="33.0" height="32.0" rx="0" fill="#fff" stroke="#b3b3c2"/><rect x="1775.5" y="78.5" width="33.0" height="32.0" rx="0" fill="#fff" stroke="#b3b3c2"/><g fill="#7a7a86"><rect x="1667.2" y="86.8" width="4.4" height="3.4" rx="1"/><path d="M1666,91.4 L1671.6,91.4 L1671.6,98 L1673,98 L1673,100 L1666,100 L1666,98 L1667.3,98 L1667.3,93.3 L1666,93.3 Z"/></g><path d="M1705.5,86.8 L1718.7,86.8 L1716,98.6 L1703,98.6 C1702.2,98.6 1702.2,100 1703,100 L1716,100 L1715.7,101 L1702.6,101 C1701.5,101 1701.8,99 1702.3,97.5 Z" fill="#7a7a86"/><path d="M1707.5,89.5 L1714.5,89.5 M1707,92 L1714,92" stroke="#fff" stroke-width="0.9"/><g fill="#7a7a86"><path d="M1747.5,89.5 C1747.5,86 1754.5,86 1754.5,89.5 Z"/><rect x="1746" y="90.3" width="10" height="10.5" rx="3"/></g><path d="M1743.3,94.5 L1746,94.5 M1756,94.5 L1758.7,94.5 M1744,89 L1746.5,91.5 M1758,89 L1755.5,91.5 M1744,101 L1746.5,98.3 M1758,101 L1755.5,98.3" stroke="#7a7a86" stroke-width="1.4"/><rect x="1750.5" y="91" width="1" height="9" fill="#fff"/><path d="M1797.30,91.52 L1799.41,91.90 L1799.41,95.30 L1797.30,95.68 L1797.25,95.81 L1798.46,97.57 L1796.07,99.96 L1794.31,98.75 L1794.18,98.80 L1793.80,100.91 L1790.40,100.91 L1790.02,98.80 L1789.89,98.75 L1788.13,99.96 L1785.74,97.57 L1786.95,95.81 L1786.90,95.68 L1784.79,95.30 L1784.79,91.90 L1786.90,91.52 L1786.95,91.39 L1785.74,89.63 L1788.13,87.24 L1789.89,88.45 L1790.02,88.40 L1790.40,86.29 L1793.80,86.29 L1794.18,88.40 L1794.31,88.45 L1796.07,87.24 L1798.46,89.63 L1797.25,91.39 Z M1794.6,93.6 A2.5,2.5 0 1 0 1789.6,93.6 A2.5,2.5 0 1 0 1794.6,93.6 Z" fill="#7a7a86" fill-rule="evenodd"/><path d="M1827.5,91.3 L1837,91.3 L1832.25,97 Z" fill="#7a7a86"/><rect x="1477" y="115" width="377" height="43.5" fill="#f3f3fb"/><rect x="1477" y="158.5" width="377" height="1" fill="#c9c9d6"/><text x="1489.5" y="142.9" font-size="16.8" fill="#22262e">My Dashboard</text><rect x="1612.5" y="126.5" width="98.0" height="23.0" rx="2" fill="#fff" stroke="#b3b3c2"/><rect x="1715.5" y="126.5" width="124.0" height="23.0" rx="2" fill="#fff" stroke="#b3b3c2"/><text x="1619" y="141" font-size="12" fill="#5b5f6b">Edit Settings</text><path d="M1702.42,135.65 L1703.87,135.92 L1703.87,138.28 L1702.42,138.55 L1702.38,138.64 L1703.21,139.85 L1701.55,141.51 L1700.34,140.68 L1700.25,140.72 L1699.98,142.17 L1697.62,142.17 L1697.35,140.72 L1697.26,140.68 L1696.05,141.51 L1694.39,139.85 L1695.22,138.64 L1695.18,138.55 L1693.73,138.28 L1693.73,135.92 L1695.18,135.65 L1695.22,135.56 L1694.39,134.35 L1696.05,132.69 L1697.26,133.52 L1697.35,133.48 L1697.62,132.03 L1699.98,132.03 L1700.25,133.48 L1700.34,133.52 L1701.55,132.69 L1703.21,134.35 L1702.38,135.56 Z M1700.5,137.1 A1.7,1.7 0 1 0 1697.1,137.1 A1.7,1.7 0 1 0 1700.5,137.1 Z" fill="#6a6a76" fill-rule="evenodd"/><text x="1722.3" y="141" font-size="12" fill="#5b5f6b">Open Dashboard</text><path d="M1826,132 L1821,132 L1821,141 L1830,141 L1830,136.5" fill="none" stroke="#6a6a76" stroke-width="1.3"/><path d="M1826.5,135.5 L1832.5,129.8 M1829,130.8 L1833,130.8 L1833,134.3" fill="none" stroke="#6a6a76" stroke-width="1.6"/><rect x="1477" y="201" width="375" height="1" fill="#b0b0bc"/><path d="M1482.5,201.5 L1482.5,164.5 L1589.5,164.5 L1589.5,201.5" fill="#fff" stroke="#b0b0bc"/><rect x="1483" y="200.5" width="106" height="2" fill="#fff"/><path d="M1597.5,201.5 L1597.5,164.5 L1704.5,164.5 L1704.5,201.5 Z" fill="#e9eaf6" stroke="#b0b0bc"/><text x="1497.3" y="186.9" font-size="16.8" font-weight="bold" fill="#4d6873">Layout</text><text x="1611.8" y="186.9" font-size="16.8" fill="#5d6870">Theming</text><text x="1489.8" y="228.9" font-size="16.8" font-weight="bold" fill="#22262e">Pages</text><rect x="1727.5" y="212.5" width="23.0" height="23.0" rx="2" fill="#fff" stroke="#b3b3c2"/><rect x="1756.5" y="212.5" width="23.0" height="23.0" rx="2" fill="#fff" stroke="#b3b3c2"/><rect x="1785.5" y="212.5" width="54.0" height="23.0" rx="2" fill="#fff" stroke="#b3b3c2"/><path d="M1735.9,223.2 L1739,220.3 L1742.1,223.2 M1735.9,226.2 L1739,223.3 L1742.1,226.2" fill="none" stroke="#6a6a76" stroke-width="1"/><path d="M1764.6,219.6 L1768,222.7 L1771.4,219.6 M1764.6,222.9 L1768,226 L1771.4,222.9" fill="none" stroke="#6a6a76" stroke-width="1.1"/><path d="M1792,222.6 L1801.7,222.6 M1796.85,217.8 L1796.85,227.5" stroke="#5b5f6b" stroke-width="2.4"/><text x="1804.5" y="227.2" font-size="12" fill="#5b5f6b">Page</text><text x="1489.8" y="261" font-size="12.75" font-style="italic" fill="#999aa3">Here you can re-order and move your widgets, groups and</text><text x="1489.8" y="279.5" font-size="12.75" font-style="italic" fill="#999aa3">pages.</text><rect x="1490.5" y="296.8" width="349" height="163.5" rx="3.5" fill="#fff" stroke="#b3b3c2"/><rect x="1493" y="296.5" width="344" height="1.5" fill="#b3b3c2"/><rect x="1491" y="344" width="348" height="1" fill="#b3b3c2"/><path d="M1520.8,317.5 L1525.5,322.3 L1530.2,317.5" fill="none" stroke="#333" stroke-width="1.4"/><g fill="none" stroke="#333" stroke-width="1.4"><rect x="1539.5" y="312.5" width="17" height="14.5"/><rect x="1543" y="315.5" width="6.5" height="6"/><rect x="1546.5" y="318.5" width="6.5" height="6"/></g><g fill="#333"><rect x="1538" y="311" width="3" height="3"/><rect x="1555" y="311" width="3" height="3"/><rect x="1538" y="325.5" width="3" height="3"/><rect x="1555" y="325.5" width="3" height="3"/></g><text x="1564" y="326.3" font-size="16.8" fill="#22262e">Home</text><text x="1616.5" y="326.3" font-size="14" fill="#a0a0aa">1 Groups</text><rect x="1764.5" y="309.5" width="25.0" height="23.0" rx="3" fill="#fff" stroke="#b3b3c2"/><ellipse cx="1776.4" cy="319.90000000000003" rx="5.6" ry="3.6" fill="none" stroke="#7a7a86" stroke-width="1.3"/><circle cx="1776.6" cy="319.1" r="2.6" fill="#7a7a86"/><rect x="1794.5" y="309.5" width="25.0" height="23.0" rx="3" fill="#fff" stroke="#b3b3c2"/><rect x="1801.3999999999999" y="319.1" width="7.6" height="4.8" fill="#7a7a86"/><path d="M1807.3,319.3 L1807.3,317.5 C1807.3,313.6 1812.8,313.6 1812.8,317.5 L1812.8,319.7" fill="none" stroke="#7a7a86" stroke-width="1.5"/><path d="M1549.5,376 L1554.2,380.8 L1558.9,376" fill="none" stroke="#333" stroke-width="1.4"/><g fill="none" stroke="#333" stroke-width="1.3"><rect x="1567.5" y="372.3" width="14.5" height="12.5"/><path d="M1567.5,376.3 L1582,376.3 M1567.5,380.5 L1582,380.5 M1572.3,372.3 L1572.3,384.8 M1577.2,372.3 L1577.2,384.8"/></g><text x="1589.5" y="384.5" font-size="16.8" fill="#22262e">Maintenance schedul…</text><text x="1777" y="371.6" font-size="14" fill="#a0a0aa">1</text><text x="1776.8" y="396" font-size="14.3" fill="#a0a0aa">Widgets</text><rect x="1764.5" y="367.5" width="25.0" height="23.0" rx="3" fill="#fff" stroke="#b3b3c2"/><ellipse cx="1776.4" cy="377.6" rx="5.6" ry="3.6" fill="none" stroke="#7a7a86" stroke-width="1.3"/><circle cx="1776.6" cy="376.8" r="2.6" fill="#7a7a86"/><rect x="1794.5" y="367.5" width="25.0" height="23.0" rx="3" fill="#fff" stroke="#b3b3c2"/><rect x="1801.3999999999999" y="376.8" width="7.6" height="4.8" fill="#7a7a86"/><path d="M1807.3,377 L1807.3,375.2 C1807.3,371.3 1812.8,371.3 1812.8,375.2 L1812.8,377.4" fill="none" stroke="#7a7a86" stroke-width="1.5"/><g><rect x="1588" y="430" width="17" height="13.5" fill="none" stroke="#333" stroke-width="1.4"/><path d="M1590.5,441 L1595,435.8 L1597.5,438.3 L1600.5,434.5 L1603,441 Z" fill="#333"/><circle cx="1592.8" cy="433.6" r="1.4" fill="#333"/></g><text x="1612.5" y="441.8" font-size="16.8" fill="#22262e">Scheduled Maintenance</text><rect x="1477" y="865" width="377" height="32" fill="#f3f3fb"/><rect x="1477" y="865" width="377" height="1" fill="#b0b0bc"/></svg>
<div id="wborder"></div></div></body></html>
